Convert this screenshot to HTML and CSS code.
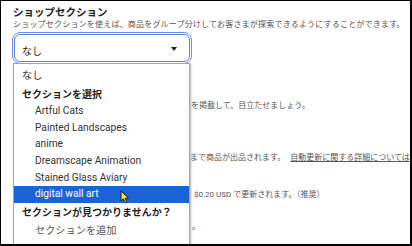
FILE: index.html
```html
<!DOCTYPE html>
<html lang="ja">
<head>
    <meta charset="UTF-8">
    <meta name="viewport" content="width=device-width, initial-scale=1.0">
    <title>ショップセクション</title>
    <link rel="stylesheet" href="styles.css">
</head>
<body>
    <div class="frame">
        <h2 class="title">ショップセクション</h2>
        <p class="hint">ショップセクションを使えば、商品をグループ分けしてお客さまが探索できるようにすることができます。</p>

        <div class="select">
            <span>なし</span>
            <span class="caret"></span>
        </div>

        <!-- the rest of the form, mostly covered by the open list -->
        <div class="behind">
            <p class="line line-feature">を掲載して、目立たせましょう。</p>
            <p class="line line-renew">まで商品が出品されます。 <a href="#">自動更新に関する詳細については</a></p>
            <p class="line line-auto">$0.20 USD で更新されます。（推奨）</p>
            <p class="line line-manual">。</p>
        </div>

        <ul class="dropdown">
            <li class="option">なし</li>
            <li class="group">セクションを選択</li>
            <li class="option item">Artful Cats</li>
            <li class="option item">Painted Landscapes</li>
            <li class="option item">anime</li>
            <li class="option item">Dreamscape Animation</li>
            <li class="option item">Stained Glass Aviary</li>
            <li class="option item active">digital wall art</li>
            <li class="group group-last">セクションが見つかりませんか？</li>
            <li class="option item muted">セクションを追加</li>
        </ul>

        <svg class="cursor" width="10" height="14" viewBox="0 0 10 14">
            <path d="M1 1 L1 11 L3.4 8.8 L5.2 12.8 L6.8 12.1 L5.1 8.3 L8.4 8.1 Z" fill="#f5e52a" stroke="#111" stroke-width="0.9" stroke-linejoin="round"/>
        </svg>
    </div>
</body>
</html>
```

FILE: styles.css
```css
body {
    margin: 0;
    background: #fff;
    font-family: 'Roboto', 'Noto Sans CJK JP', sans-serif;
    color: #222;
}

.frame {
    position: relative;
    width: 412px;
    height: 246px;
    box-sizing: border-box;
    border-style: solid;
    border-color: #000;
    border-width: 1px 2px 2px 1px;
    padding: 5px 0 0 12px;
    overflow: hidden;
}

.title {
    margin: 0;
    font-size: 10.5px;
    line-height: 14px;
    font-weight: bold;
    color: #222;
}

.hint {
    margin: 0;
    font-size: 8px;
    line-height: 9px;
    letter-spacing: 0.2px;
    color: #555;
    white-space: nowrap;
}

.select {
    display: flex;
    align-items: center;
    justify-content: space-between;
    width: 176px;
    height: 28px;
    box-sizing: border-box;
    margin: 5px 0 0 1px;
    padding: 4px 12px 0 7px;
    border: 1px solid #5b80e2;
    border-radius: 6px;
    outline: 1px solid #6d8fea;
    outline-offset: 1px;
    font-size: 10px;
    color: #222;
}

.caret {
    width: 0;
    height: 0;
    margin-top: -3px;
    border-left: 3px solid transparent;
    border-right: 3px solid transparent;
    border-top: 4px solid #222;
}

.behind {
    padding-left: 177px;
    font-size: 8px;
    color: #555;
    white-space: nowrap;
}

.line {
    margin: 0;
    line-height: 10px;
}

.line-feature {
    margin-top: 39px;
    margin-left: 1px;
}

.line-renew {
    margin-top: 42px;
}

.line-renew a {
    margin-left: 3px;
    color: #555;
    text-decoration: underline;
}

.line-auto {
    margin-top: 27px;
    margin-left: 4px;
}

.line-manual {
    margin-top: 22px;
    margin-left: 2px;
}

.dropdown {
    position: absolute;
    top: 62px;
    left: 12px;
    width: 177px;
    height: 200px;
    box-sizing: border-box;
    margin: 0;
    padding: 4px 0 0;
    list-style: none;
    background: #fff;
    border: 1px solid #a5a5a5;
    box-shadow: 1px 1px 2px rgba(0, 0, 0, 0.3);
    font-size: 10.2px;
}

.option {
    height: 16px;
    line-height: 16px;
    padding-left: 8px;
    color: #333;
}

.item {
    height: 16.7px;
    line-height: 16.7px;
    padding-left: 21px;
}

.group {
    padding: 3px 0 0 8px;
    line-height: 16px;
    font-size: 10px;
    font-weight: bold;
    color: #1e1e1e;
}

.group-last {
    padding: 2px 0 2px 8px;
}

.active {
    background: #1c63d5;
    color: #fff;
}

.muted {
    color: #555;
}

.cursor {
    position: absolute;
    top: 189px;
    left: 119px;
}
```
